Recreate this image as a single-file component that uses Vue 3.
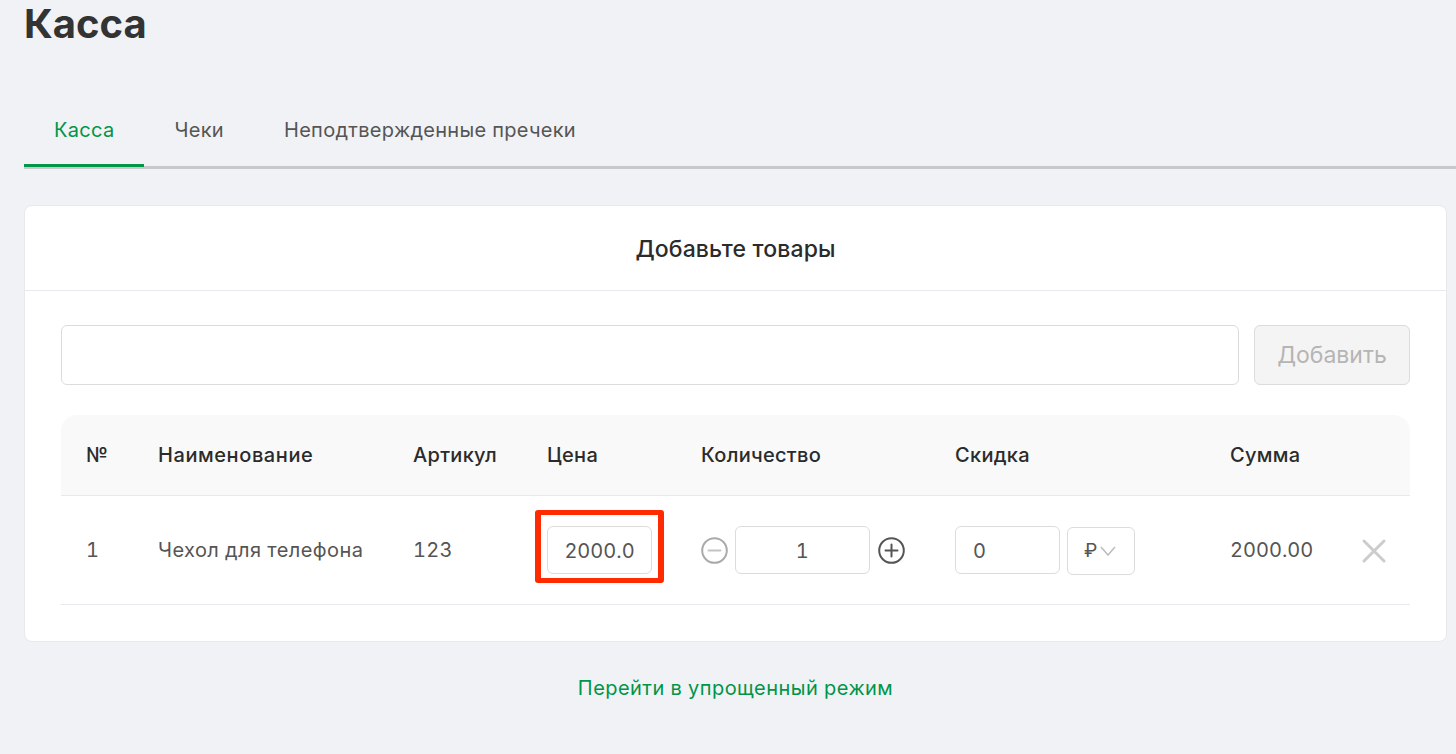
<script setup>
const tabs = ['Касса', 'Чеки', 'Неподтвержденные пречеки']
const columns = ['№', 'Наименование', 'Артикул', 'Цена', 'Количество', 'Скидка', 'Сумма']
</script>

<template>
  <div class="page">
    <h1 class="title">Касса</h1>
    <nav class="tabs">
      <span v-for="(tab, i) in tabs" :key="tab" class="tab" :class="{ active: i === 0 }">{{ tab }}</span>
    </nav>
    <section class="card">
      <header class="card-head">Добавьте товары</header>
      <div class="card-body">
        <div class="search">
          <div class="field search-input"></div>
          <button class="add" type="button">Добавить</button>
        </div>
        <div class="table">
          <div class="grid thead">
            <span v-for="c in columns" :key="c" class="cell">{{ c }}</span>
          </div>
          <div class="grid trow">
            <span class="cell">1</span>
            <span class="cell name">Чехол для телефона</span>
            <span class="cell">123</span>
            <div class="cell">
              <div class="price-wrap">
                <div class="field price">2000.0</div>
                <div class="highlight"></div>
              </div>
            </div>
            <div class="cell qty">
              <svg class="step off" viewBox="0 0 27 27" width="27" height="27"><circle cx="13.5" cy="13.5" r="12.3"/><path class="minus" d="M7.5 13.5h12"/></svg>
              <div class="field qty-input">1</div>
              <svg class="step plus" viewBox="0 0 27 27" width="27" height="27"><circle cx="13.5" cy="13.5" r="12.3"/><path d="M7.5 13.5h12M13.5 7.5v12"/></svg>
            </div>
            <div class="cell discount">
              <div class="field disc-input">0</div>
              <div class="field currency">
                <span>₽</span>
                <svg viewBox="0 0 16 10" width="16" height="10"><path d="M1 1l7 8 7-8"/></svg>
              </div>
            </div>
            <span class="cell amount">2000.00</span>
            <svg class="remove" viewBox="0 0 26 26" width="26" height="26"><path d="M3 3l20 20M23 3L3 23"/></svg>
          </div>
        </div>
      </div>
    </section>
    <a class="simple">Перейти в упрощенный режим</a>
  </div>
</template>

<style scoped>
.page {
  box-sizing: border-box;
  height: 754px;
  overflow: hidden;
  padding-left: 24px;
  background: #f0f2f6;
  font-family: Inter, "Noto Sans", sans-serif;
  font-size: 20px;
  letter-spacing: 0.3px;
  font-variant-numeric: tabular-nums;
  color: #555;
}
.title {
  margin: 0;
  height: 46px;
  font-size: 40px;
  line-height: 48.4px;
  font-weight: 700;
  letter-spacing: 0;
  color: #333;
}
.tabs {
  display: flex;
  margin-top: 48px;
  height: 72px;
  border-bottom: 3px solid #c6c8ca;
}
.tab {
  box-sizing: border-box;
  height: 73px;
  padding: 0 30px;
  line-height: 72px;
}
.tab.active {
  color: #009548;
  border-bottom: 3px solid #009548;
}
.card {
  box-sizing: border-box;
  width: 1423px;
  height: 437px;
  margin-top: 36px;
  background: #fff;
  border: 1px solid #e8e9ec;
  border-radius: 8px;
}
.card-head {
  height: 84px;
  line-height: 86px;
  text-align: center;
  font-size: 23px;
  font-weight: 500;
  letter-spacing: 0.13px;
  color: #2b2b2b;
  border-bottom: 1px solid #e8e9ec;
}
.card-body {
  padding: 34px 36px 0;
}
.search {
  display: flex;
  gap: 15px;
}
.field {
  box-sizing: border-box;
  background: #fff;
  border: 1px solid #dcdcdc;
  border-radius: 6px;
}
.search-input {
  flex: 1;
  height: 60px;
}
.add {
  width: 156px;
  height: 60px;
  padding: 0;
  background: #f4f4f4;
  border: 1px solid #dcdcdc;
  border-radius: 6px;
  font: inherit;
  font-size: 23px;
  letter-spacing: 0;
  color: #b5b5b5;
}
.table {
  margin-top: 30px;
}
.grid {
  display: grid;
  grid-template-columns: 72px 255px 134px 154px 254px 275px 205px;
  align-items: center;
  position: relative;
}
.cell {
  padding-left: 25px;
}
.thead {
  height: 81px;
  background: #f9f9f9;
  border-radius: 16px 16px 0 0;
  border-bottom: 1px solid #e8e9ec;
  box-sizing: border-box;
  font-weight: 500;
  color: #2b2b2b;
}
.thead .cell:nth-child(2) {
  letter-spacing: 0.58px;
}
.trow {
  box-sizing: border-box;
  height: 109px;
  border-bottom: 1px solid #e8e9ec;
}
.name {
  letter-spacing: 0.42px;
}
.amount {
  letter-spacing: 0;
}
.price-wrap {
  position: relative;
  width: 105px;
}
.price {
  height: 48px;
  line-height: 48px;
  text-align: center;
  letter-spacing: 0;
}
.highlight {
  position: absolute;
  left: -12px;
  top: -16px;
  width: 129px;
  height: 73px;
  box-sizing: border-box;
  border: 5px solid #ff2a00;
  border-left-width: 6px;
  border-right-width: 6px;
  border-radius: 3px;
}
.qty {
  display: flex;
  align-items: center;
  gap: 7px;
}
.qty-input {
  width: 135px;
  height: 48px;
  line-height: 48px;
  text-align: center;
}
.step {
  fill: none;
  stroke: #555;
  stroke-width: 2;
  stroke-linecap: round;
}
.step.plus {
  margin-left: 1px;
}
.step.off {
  stroke: #aaa;
}
.step .minus {
  stroke: #c4c4c4;
}
.discount {
  display: flex;
  align-items: center;
  gap: 7px;
}
.disc-input {
  width: 105px;
  height: 48px;
  line-height: 48px;
  padding-left: 17px;
}
.currency {
  display: flex;
  align-items: center;
  gap: 2px;
  width: 68px;
  height: 48px;
  margin-top: 1px;
  padding-left: 16px;
  font-size: 19px;
}
.currency svg {
  fill: none;
  stroke: #bbb;
  stroke-width: 1.5;
}
.remove {
  position: absolute;
  left: 1300px;
  top: 42px;
  fill: none;
  stroke: #ccc;
  stroke-width: 3;
  stroke-linecap: round;
}
.simple {
  display: block;
  width: 1423px;
  margin-top: 34px;
  text-align: center;
  letter-spacing: 0.45px;
  color: #009548;
}
</style>
